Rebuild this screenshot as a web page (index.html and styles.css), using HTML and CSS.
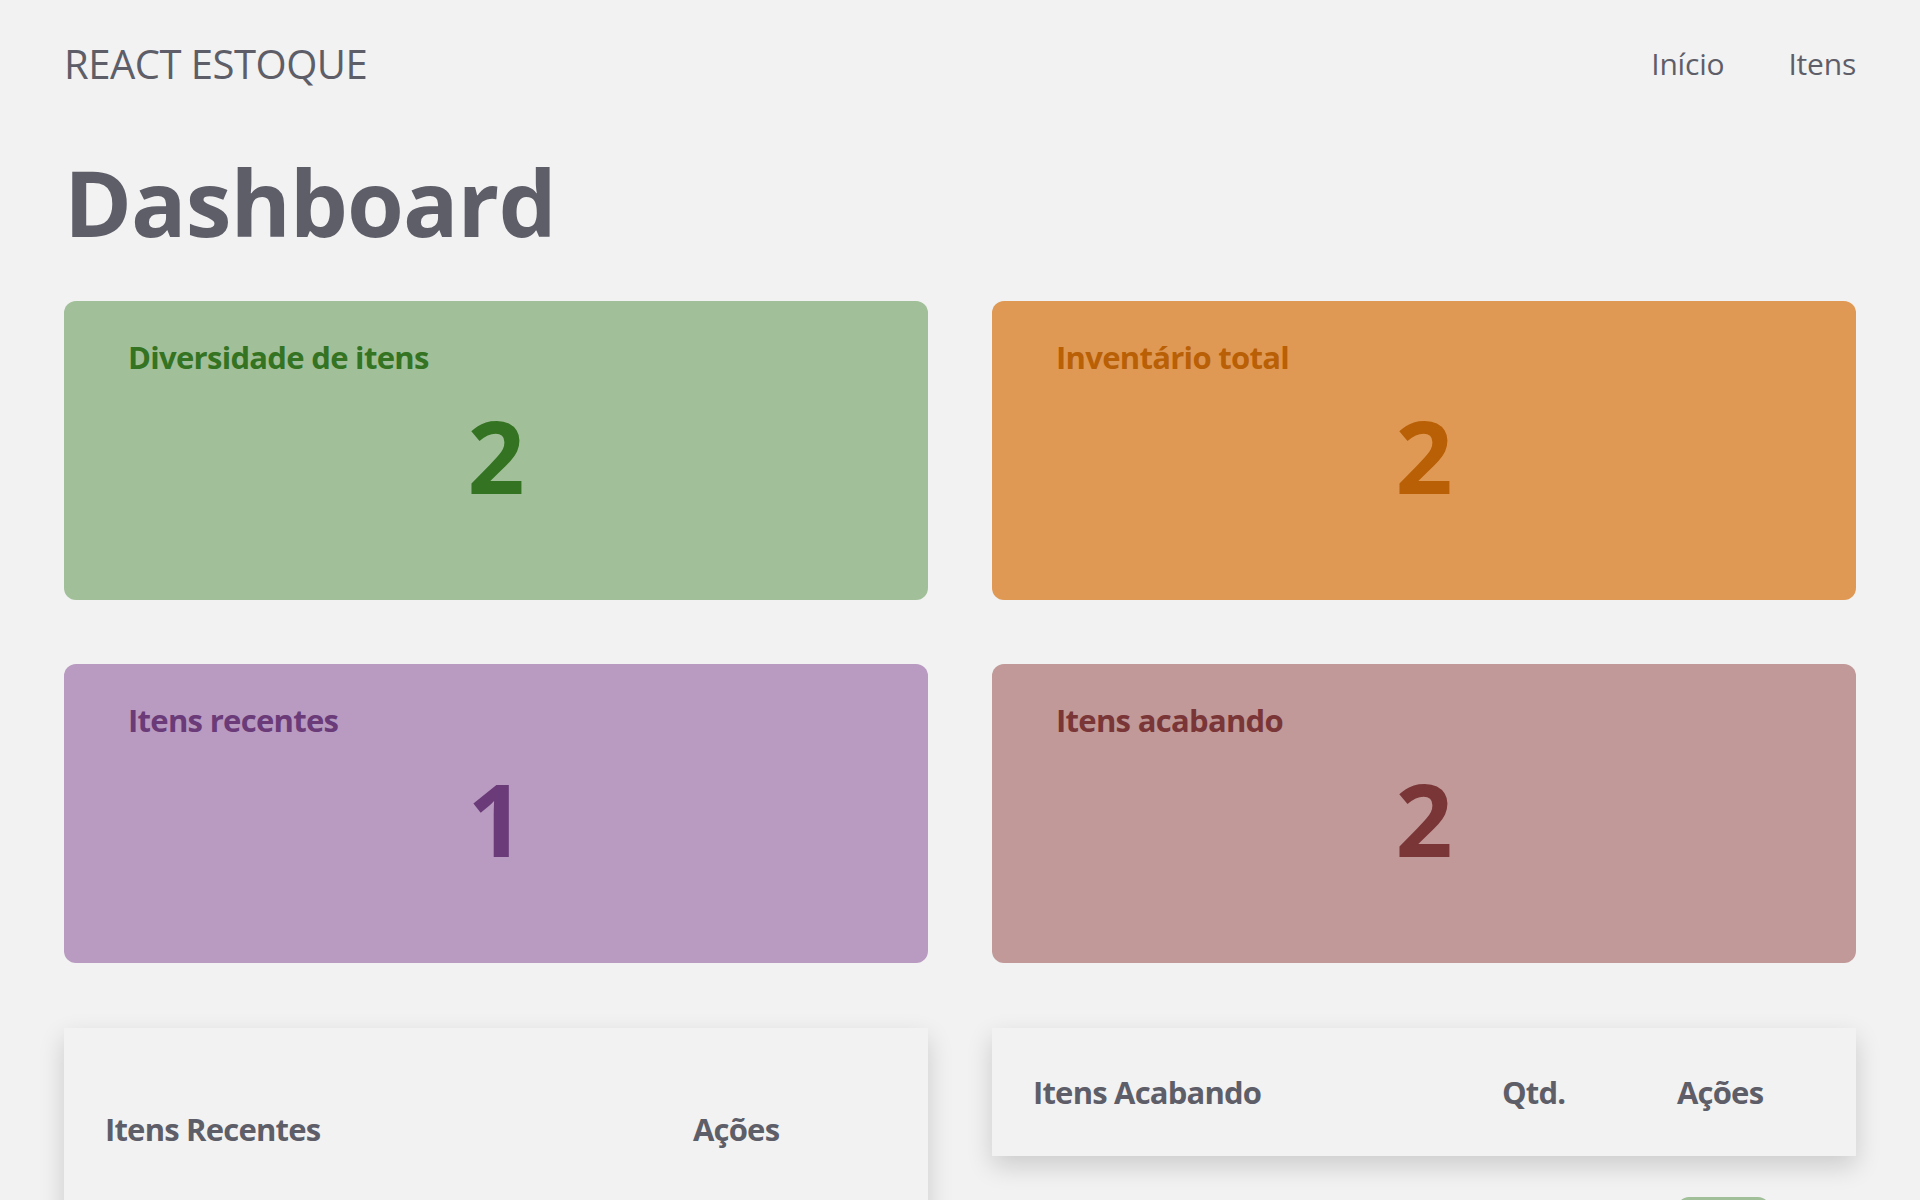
FILE: index.html
```html
<!DOCTYPE html>
<html lang="pt-BR">
<head>
<meta charset="utf-8">
<title>React Estoque</title>
<link rel="stylesheet" href="styles.css">
</head>
<body>
<header class="topbar">
  <div class="logo">REACT ESTOQUE</div>
  <nav class="nav">
    <a href="#">Início</a>
    <a href="#">Itens</a>
  </nav>
</header>
<main class="page">
  <h1 class="title">Dashboard</h1>
  <section class="stats">
    <div class="stat stat-green">
      <h2 class="stat-label">Diversidade de itens</h2>
      <div class="stat-value">2</div>
    </div>
    <div class="stat stat-orange">
      <h2 class="stat-label">Inventário total</h2>
      <div class="stat-value">2</div>
    </div>
    <div class="stat stat-purple">
      <h2 class="stat-label">Itens recentes</h2>
      <div class="stat-value">1</div>
    </div>
    <div class="stat stat-red">
      <h2 class="stat-label">Itens acabando</h2>
      <div class="stat-value">2</div>
    </div>
  </section>
  <section class="tables">
    <div class="table recent">
      <div class="thead">
        <span>Itens Recentes</span>
        <span>Ações</span>
      </div>
    </div>
    <div class="table ending">
      <div class="thead">
        <span>Itens Acabando</span>
        <span>Qtd.</span>
        <span>Ações</span>
      </div>
      <div class="trow">
        <span></span>
        <span></span>
        <span><button class="btn" aria-label="Ver"></button></span>
      </div>
    </div>
  </section>
</main>
</body>
</html>
```
FILE: styles.css
```css
html { background: #f2f2f2; }

body {
  margin: 0;
  padding: 0 64px 200px 64px;
  font-family: "Open Sans", "Noto Sans", sans-serif;
  color: #5e5e69;
  background: #f2f2f2;
}

.topbar {
  display: flex;
  justify-content: space-between;
  align-items: center;
  padding-top: 40px;
  height: 48px;
}
.logo {
  font-size: 40px;
  line-height: 48px;
  letter-spacing: -0.5px;
}
.nav { display: flex; gap: 64px; }
.nav a {
  color: #5e5e69;
  text-decoration: none;
  font-size: 30px;
  line-height: 48px;
  letter-spacing: -0.2px;
}

.title {
  margin: 59px 0 44px;
  font-size: 92px;
  line-height: 110px;
  font-weight: 700;
  letter-spacing: -1px;
}

.stats {
  display: grid;
  grid-template-columns: 1fr 1fr;
  gap: 64px;
}
.stat {
  height: 299px;
  box-sizing: border-box;
  border-radius: 12px;
  padding: 37px 64px 0;
}
.stat-label {
  margin: 0;
  font-size: 31px;
  line-height: 38px;
  font-weight: 700;
  letter-spacing: -0.7px;
}
.stat-value {
  margin-top: 24px;
  text-align: center;
  font-size: 100px;
  line-height: 110px;
  font-weight: 700;
}
.stat-green { background: #a1c09a; color: #347321; }
.stat-orange { background: #e09954; color: #b95f05; }
.stat-purple { background: #b99ac1; color: #6a3b78; }
.stat-red { background: #c09998; color: #7a3537; }

.tables {
  margin-top: 65px;
  display: grid;
  grid-template-columns: 1fr 1fr;
  gap: 64px;
  align-items: start;
}
.thead {
  display: grid;
  align-items: center;
  background: #f2f2f2;
  box-shadow: 0 10px 24px rgba(0, 0, 0, 0.16);
  font-size: 31px;
  line-height: 38px;
  font-weight: 700;
  letter-spacing: -0.8px;
  padding: 0 41px;
}
.recent .thead {
  grid-template-columns: 588px auto;
  padding-top: 82px;
  padding-bottom: 240px;
}
.ending .thead {
  grid-template-columns: 469px 175px auto;
  padding-top: 45px;
  padding-bottom: 45px;
}
.trow {
  display: grid;
  grid-template-columns: 469px 175px auto;
  padding: 41px 41px;
  align-items: center;
}
.btn {
  width: 93px;
  height: 44px;
  border: 0;
  border-radius: 12px;
  background: #a1c09a;
}
```
